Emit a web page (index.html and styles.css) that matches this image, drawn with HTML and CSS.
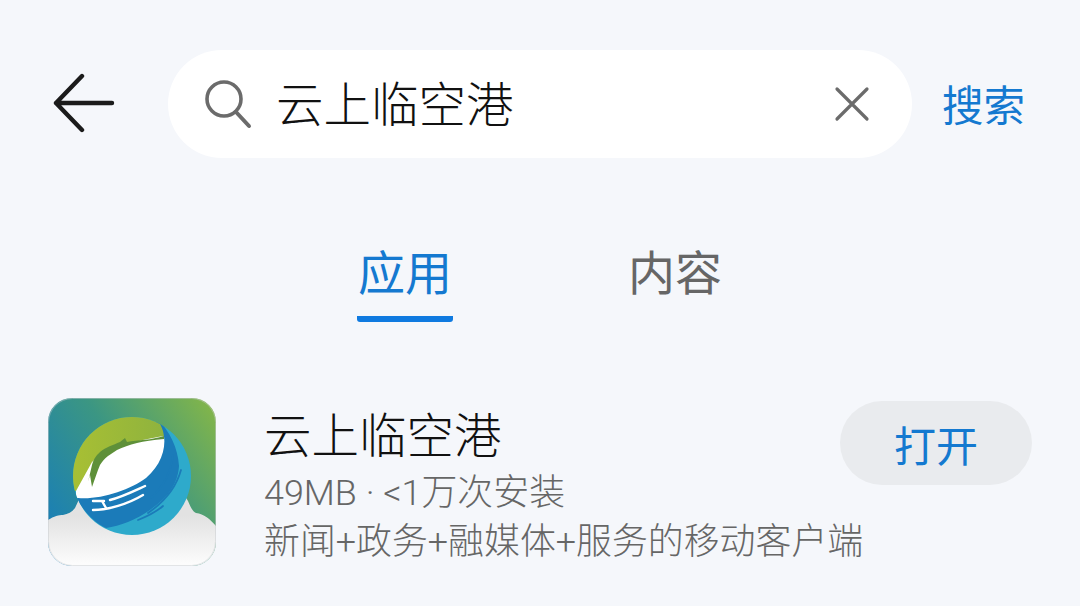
FILE: index.html
```html
<!DOCTYPE html>
<html lang="zh-CN">
<head>
    <meta charset="UTF-8">
    <title>云上临空港</title>
    <link rel="stylesheet" href="styles.css">
</head>
<body>
    <header class="search-row">
        <svg class="back-icon" width="62" height="62" viewBox="0 0 62 62">
            <path d="M29 3 L3 30 L29 57 M3 30 H59" fill="none" stroke="#1b1b1b" stroke-width="4.4" stroke-linecap="round" stroke-linejoin="round"/>
        </svg>
        <div class="search-box">
            <svg class="search-icon" width="48" height="50" viewBox="0 0 48 50">
                <circle cx="20" cy="20" r="17" fill="none" stroke="#6b6b6b" stroke-width="3.6"/>
                <path d="M32 33 L45 47" fill="none" stroke="#6b6b6b" stroke-width="4" stroke-linecap="round"/>
            </svg>
            <span class="search-text">云上临空港</span>
            <svg class="clear-icon" width="36" height="36" viewBox="0 0 36 36">
                <path d="M3 3 L33 33 M33 3 L3 33" fill="none" stroke="#6b6b6b" stroke-width="3.2" stroke-linecap="round"/>
            </svg>
        </div>
        <span class="search-btn">搜索</span>
    </header>

    <nav class="tabs">
        <div class="tab tab-active">应用</div>
        <div class="tab">内容</div>
    </nav>

    <section class="app-row">
        <svg class="app-icon" width="168" height="168" viewBox="0 0 168 168">
            <defs>
                <linearGradient id="bg" x1="0" y1="0.75" x2="1" y2="0.05">
                    <stop offset="0" stop-color="#1a7fb5"/>
                    <stop offset="0.5" stop-color="#3b9683"/>
                    <stop offset="1" stop-color="#84b648"/>
                </linearGradient>
                <linearGradient id="cloud" gradientUnits="userSpaceOnUse" x1="0" y1="118" x2="0" y2="166">
                    <stop offset="0" stop-color="#e2e2e2"/>
                    <stop offset="1" stop-color="#fcfcfc"/>
                </linearGradient>
                <linearGradient id="leaf" x1="0" y1="0" x2="1" y2="0">
                    <stop offset="0" stop-color="#a9c033"/>
                    <stop offset="1" stop-color="#8fb33e"/>
                </linearGradient>
                <clipPath id="rounded"><rect width="168" height="168" rx="24"/></clipPath>
                <clipPath id="ball"><circle cx="84" cy="78" r="59"/></clipPath>
            </defs>
            <g clip-path="url(#rounded)">
                <rect width="168" height="168" fill="url(#bg)"/>
                <path d="M0 122 C6 118 11 117 15 117 C20 116 24 114 27 110 L34 95 L132 90 L140 103 C143 110 145 114 148 115 C156 116 162 121 168 128 V168 H0 Z" fill="url(#cloud)"/>
                <g clip-path="url(#ball)">
                    <rect x="20" y="15" width="130" height="130" fill="#2eaacb"/>
                    <path d="M109 20 C122 34 130 50 131 68 C130 84 122 98 102 112 C88 122 72 128 58 130 C45 124 35 112 28 100 C60 100 100 78 109 20 Z" fill="#1b7bb9"/>
                    <path d="M20 98 L20 15 L109 15 L109 21 C113 27 116 33 116 40 L45 64 L29 92 Z" fill="url(#leaf)"/>
                    <path d="M28 100 L28 93 L44 64 C60 50 90 42 116 38 C118 52 112 68 98 80 C82 92 52 102 30 100 Z" fill="#ffffff"/>
                    <path d="M40 84 L44 67 C46 60 49 57 52 54 C58 49 65 47 72 44 L77 40 L79 44 C90 42 104 42 116 38 L116 41 C105 42 96 43 89 45 C81 47 75 49 69 52 L60 58 C56 61 54 64 52 67 L50 72 L44 89 L42 77 Z" fill="#5e9039"/>
                    <path d="M97 88 C86 93 74 99 62 102 M45 103 H56 M45 112 C60 112 80 106 95 97 M54 103 L58 110" fill="none" stroke="#ffffff" stroke-width="2.4" stroke-linecap="round"/>
                    <path d="M125 57 C123 75 114 90 103 100 M133 72 C128 90 116 104 100 115 M90 122 C100 118 108 114 115 108" fill="none" stroke="#1b7bb9" stroke-width="1.8" stroke-linecap="round"/>
                </g>
            </g>
            <rect x="0.5" y="0.5" width="167" height="167" rx="24" fill="none" stroke="#c8ccd0" stroke-opacity="0.5"/>
        </svg>
        <div class="app-info">
            <div class="app-name">云上临空港</div>
            <div class="app-meta">49MB · &lt;1万次安装</div>
            <div class="app-desc">新闻+政务+融媒体+服务的移动客户端</div>
        </div>
        <button class="open-btn">打开</button>
    </section>
</body>
</html>
```

FILE: styles.css
```css
body {
    margin: 0;
    width: 1080px;
    height: 606px;
    overflow: hidden;
    background-color: #f5f7fb;
    font-family: Roboto, "Noto Sans CJK SC", sans-serif;
    font-weight: 300;
}

.search-row {
    display: flex;
    align-items: center;
    padding: 50px 0 0 53px;
    height: 108px;
}

.back-icon {
    margin-right: 53px;
}

.search-box {
    display: flex;
    align-items: center;
    width: 744px;
    height: 108px;
    border-radius: 54px;
    background-color: #ffffff;
    box-sizing: border-box;
    padding: 0 42px 0 36px;
}

.search-icon {
    margin-right: 24px;
}

.search-text {
    flex: 1;
    font-size: 47.5px;
    line-height: 60px;
    margin-top: 4px;
    color: #111111;
}

.search-btn {
    margin-left: 30px;
    font-size: 41.5px;
    font-weight: 400;
    margin-top: -3px;
    color: #1479d0;
}

.tabs {
    display: flex;
    padding: 80px 0 0 357px;
}

.tab {
    width: 96px;
    margin-right: 174px;
    height: 84px;
    font-size: 47px;
    font-weight: 400;
    line-height: 72px;
    text-align: center;
    color: #666666;
    box-sizing: border-box;
}

.tab-active {
    color: #1479d0;
    border-bottom: 6px solid #0f7ae0;
    border-radius: 0 0 3px 3px;
}

.app-row {
    display: flex;
    align-items: flex-start;
    padding: 76px 48px 0 48px;
}

.app-icon {
    flex: none;
    margin-right: 48px;
}

.app-info {
    flex: 1;
    min-width: 0;
    white-space: nowrap;
}

.app-name {
    font-size: 47.5px;
    line-height: 63px;
    margin-top: 8px;
    color: #111111;
}

.app-meta,
.app-desc {
    font-size: 35.9px;
    line-height: 49px;
    color: #666666;
}

.open-btn {
    width: 192px;
    height: 84px;
    margin-top: 3px;
    border: none;
    border-radius: 42px;
    background-color: #e9ebee;
    color: #1479d0;
    font-family: inherit;
    font-weight: 400;
    font-size: 42px;
}
```
